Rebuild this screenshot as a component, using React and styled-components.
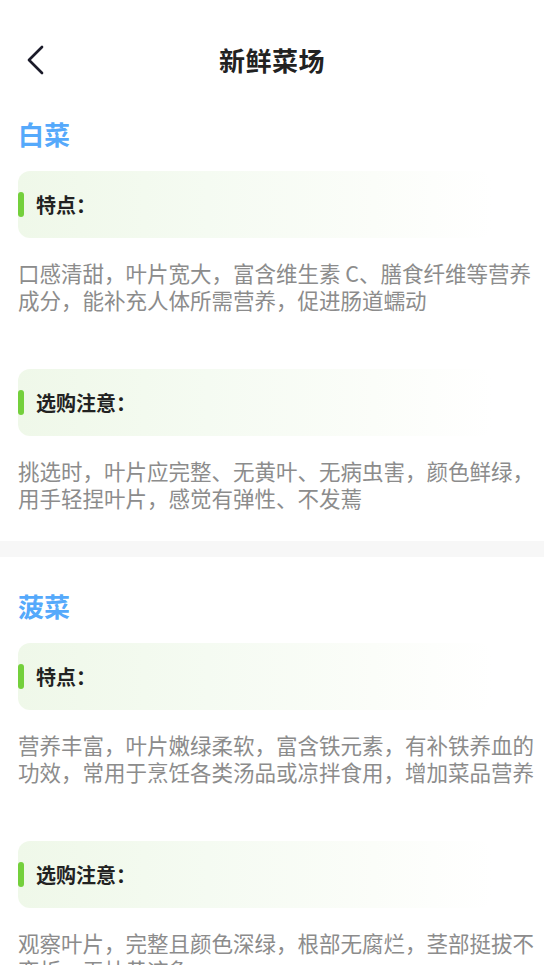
import React from "react";
import styled, { createGlobalStyle } from "styled-components";

const Global = createGlobalStyle`
  html, body { margin: 0; padding: 0; background: #ffffff; }
  body { font-family: "Noto Sans CJK SC", "Noto Sans", sans-serif; }
  * { box-sizing: border-box; }
`;

const Page = styled.div`
  width: 544px;
  min-height: 965px;
  background: #ffffff;
  overflow: hidden;
`;

const Header = styled.header`
  position: relative;
  height: 50px;
  margin-top: 35px;
  display: flex;
  align-items: center;
  justify-content: center;
`;

const BackButton = styled.button`
  position: absolute;
  left: 22px;
  top: 50%;
  transform: translateY(-50%);
  width: 28px;
  height: 36px;
  padding: 0;
  border: none;
  background: transparent;
  display: flex;
  align-items: center;
  justify-content: center;
`;

const Title = styled.h1`
  margin: 0;
  font-size: 26px;
  line-height: 36px;
  font-weight: 700;
  color: #222222;
  letter-spacing: 0.5px;
`;

const Section = styled.section`
  padding: 31px 0 30px 18px;
`;

const Divider = styled.div`
  height: 16px;
  background: #f7f7f7;
`;

const VegName = styled.h2`
  margin: 0 0 19px;
  font-size: 26px;
  line-height: 36px;
  font-weight: 700;
  color: #55a9fb;
`;

const Block = styled.div`
  & + & {
    margin-top: 56px;
  }
`;

const Tag = styled.div`
  width: 474px;
  height: 67px;
  border-radius: 12px;
  background: linear-gradient(90deg, #eff8e9 0%, #f5fbf2 40%, #fbfdf9 75%, #ffffff 100%);
  display: flex;
  align-items: center;
  gap: 12px;
`;

const Bar = styled.span`
  width: 6px;
  height: 25px;
  border-radius: 3px;
  background: #74d03c;
`;

const TagText = styled.span`
  font-size: 20px;
  line-height: 28px;
  font-weight: 700;
  color: #222222;
`;

const Desc = styled.p`
  margin: 21px 0 0;
  width: 520px;
  font-size: 21.5px;
  line-height: 27px;
  color: #8c8c8c;
`;

const data = [
  {
    name: "白菜",
    items: [
      {
        label: "特点：",
        text: "口感清甜，叶片宽大，富含维生素 C、膳食纤维等营养成分，能补充人体所需营养，促进肠道蠕动",
      },
      {
        label: "选购注意：",
        text: "挑选时，叶片应完整、无黄叶、无病虫害，颜色鲜绿，用手轻捏叶片，感觉有弹性、不发蔫",
      },
    ],
  },
  {
    name: "菠菜",
    items: [
      {
        label: "特点：",
        text: "营养丰富，叶片嫩绿柔软，富含铁元素，有补铁养血的功效，常用于烹饪各类汤品或凉拌食用，增加菜品营养",
      },
      {
        label: "选购注意：",
        text: "观察叶片，完整且颜色深绿，根部无腐烂，茎部挺拔不弯折，无枯黄迹象",
      },
    ],
  },
];

export default function App() {
  return (
    <Page>
      <Global />
      <Header>
        <BackButton aria-label="返回">
          <svg width="20" height="30" viewBox="0 0 20 30" fill="none">
            <polyline
              points="16,2 3,15 16,28"
              stroke="#1b1b2a"
              strokeWidth="2.7"
              strokeLinecap="round"
              strokeLinejoin="round"
            />
          </svg>
        </BackButton>
        <Title>新鲜菜场</Title>
      </Header>
      {data.map((veg, i) => (
        <React.Fragment key={veg.name}>
          {i > 0 && <Divider />}
          <Section>
            <VegName>{veg.name}</VegName>
            {veg.items.map((it) => (
              <Block key={it.label}>
                <Tag>
                  <Bar />
                  <TagText>{it.label}</TagText>
                </Tag>
                <Desc>{it.text}</Desc>
              </Block>
            ))}
          </Section>
        </React.Fragment>
      ))}
    </Page>
  );
}
